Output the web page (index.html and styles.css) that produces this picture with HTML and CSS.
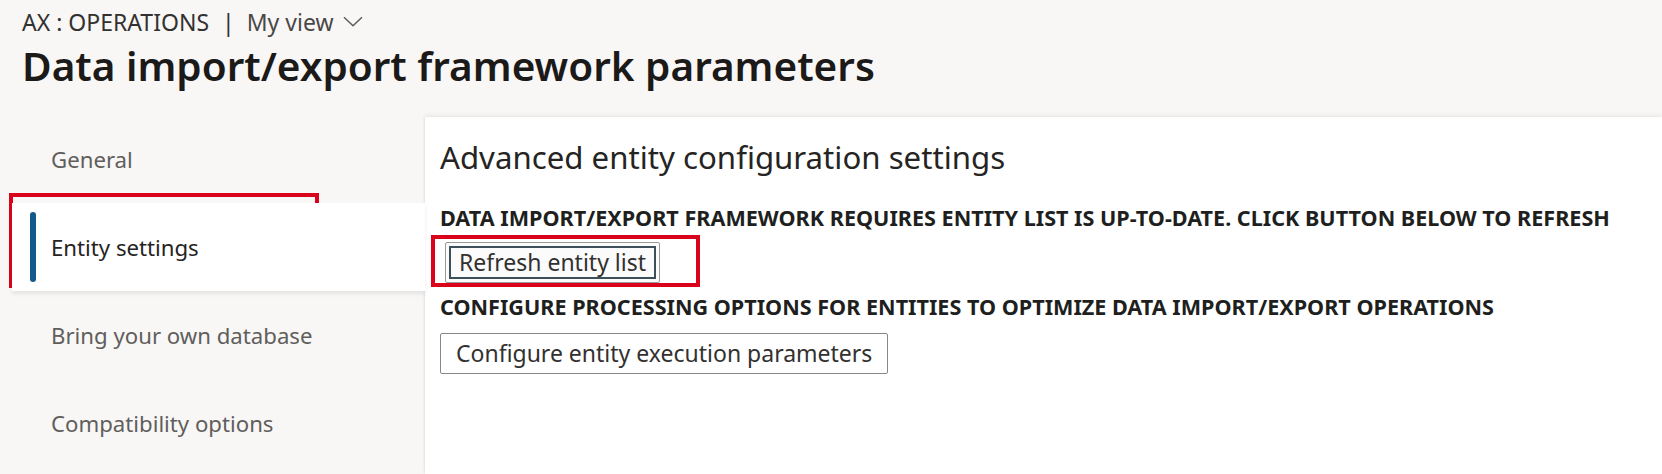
FILE: index.html
```html
<!DOCTYPE html>
<html lang="en">
<head>
<meta charset="utf-8">
<title>Data import/export framework parameters</title>
<link rel="stylesheet" href="styles.css">
</head>
<body>
<div class="page">
  <header class="header">
    <div class="crumbs">
      <span class="company">AX : OPERATIONS</span>
      <span class="sep">|</span>
      <span class="view">My view</span>
      <svg class="chev" width="20" height="11" viewBox="0 0 20 11" aria-hidden="true"><path d="M1 1.2 L10 9.8 L19 1.2" fill="none" stroke="#5f5d5b" stroke-width="1.5"/></svg>
    </div>
    <h1 class="title">Data import/export framework parameters</h1>
  </header>
  <div class="content">
    <nav class="nav">
      <div class="nav-item">General</div>
      <div class="nav-item selected"><span class="bar"></span><span>Entity settings</span></div>
      <div class="nav-item">Bring your own database</div>
      <div class="nav-item">Compatibility options</div>
    </nav>
    <main class="panel">
      <h2 class="panel-title">Advanced entity configuration settings</h2>
      <div class="label">DATA IMPORT/EXPORT FRAMEWORK REQUIRES ENTITY LIST IS UP-TO-DATE. CLICK BUTTON BELOW TO REFRESH</div>
      <div class="row"><button class="btn focused">Refresh entity list</button></div>
      <div class="label">CONFIGURE PROCESSING OPTIONS FOR ENTITIES TO OPTIMIZE DATA IMPORT/EXPORT OPERATIONS</div>
      <div class="row"><button class="btn">Configure entity execution parameters</button></div>
    </main>
  </div>
  <div class="mark mark-nav"></div>
  <div class="mark mark-btn"></div>
</div>
</body>
</html>
```
FILE: styles.css
```css
* { box-sizing: border-box; }
html, body { margin: 0; padding: 0; }
body {
  width: 1662px;
  height: 474px;
  overflow: hidden;
  background: #f8f7f6;
  font-family: "Noto Sans", "Open Sans", sans-serif;
  color: #323130;
}
.page {
  position: relative;
  width: 1662px;
  height: 474px;
}
.header {
  height: 115px;
  padding: 7px 0 0 22px;
}
.crumbs {
  display: flex;
  align-items: center;
  height: 31px;
  font-size: 23px;
  line-height: 31px;
  color: #323130;
}
.sep { margin: 0 12px 0 13px; color: #323130; }
.view { color: #4a4846; }
.chev { margin-left: 10px; margin-top: -3px; }
.title {
  margin: 0;
  font-size: 40.5px;
  line-height: 55px;
  font-weight: 600;
  color: #1b1a19;
}
.content {
  display: flex;
  height: 359px;
}
.nav {
  width: 425px;
  flex: none;
  padding-left: 12px;
}
.nav-item {
  height: 88px;
  display: flex;
  align-items: center;
  padding-left: 39px;
  font-size: 22.2px;
  color: #605e5c;
}
.nav-item.selected {
  position: relative;
  z-index: 2;
  background: #ffffff;
  color: #252423;
  padding-left: 18px;
  gap: 15px;
  box-shadow: 0 3px 4px rgba(0,0,0,0.08);
}
.bar {
  width: 6px;
  height: 70px;
  border-radius: 3px;
  background: #135a8a;
}
.panel {
  flex: 1;
  margin-top: 2px;
  background: #ffffff;
  padding: 22px 0 0 15px;
  box-shadow: -1px 0 2px rgba(0,0,0,0.07), 0 -3px 5px rgba(0,0,0,0.04);
}
.panel-title {
  margin: 0;
  font-size: 31.2px;
  line-height: 36px;
  font-weight: 400;
  color: #252423;
}
.label {
  margin-top: 31px;
  font-size: 21.6px;
  line-height: 24px;
  font-weight: 700;
  color: #201f1e;
}
.row + .label { margin-top: 12px; }
.row { display: flex; margin-top: 12px; }
.row:last-child { margin-top: 14px; }
.btn {
  height: 41px;
  padding: 0 15px;
  border: 1px solid #8a8886;
  border-radius: 2px;
  background: #ffffff;
  font-family: inherit;
  font-size: 23px;
  color: #323130;
  line-height: 1;
}
.btn.focused {
  margin-left: 5px;
  padding: 0 13px;
  border-color: #9c9a98;
  outline: 2px solid #3d4f59;
  outline-offset: -6px;
  background: #fbfbfb;
}
.mark {
  position: absolute;
  border: 4px solid #d9041c;
}
.mark-nav { left: 9px; top: 193px; width: 310px; height: 95px; }
.mark-btn { left: 431px; top: 235px; width: 269px; height: 52px; }
```
